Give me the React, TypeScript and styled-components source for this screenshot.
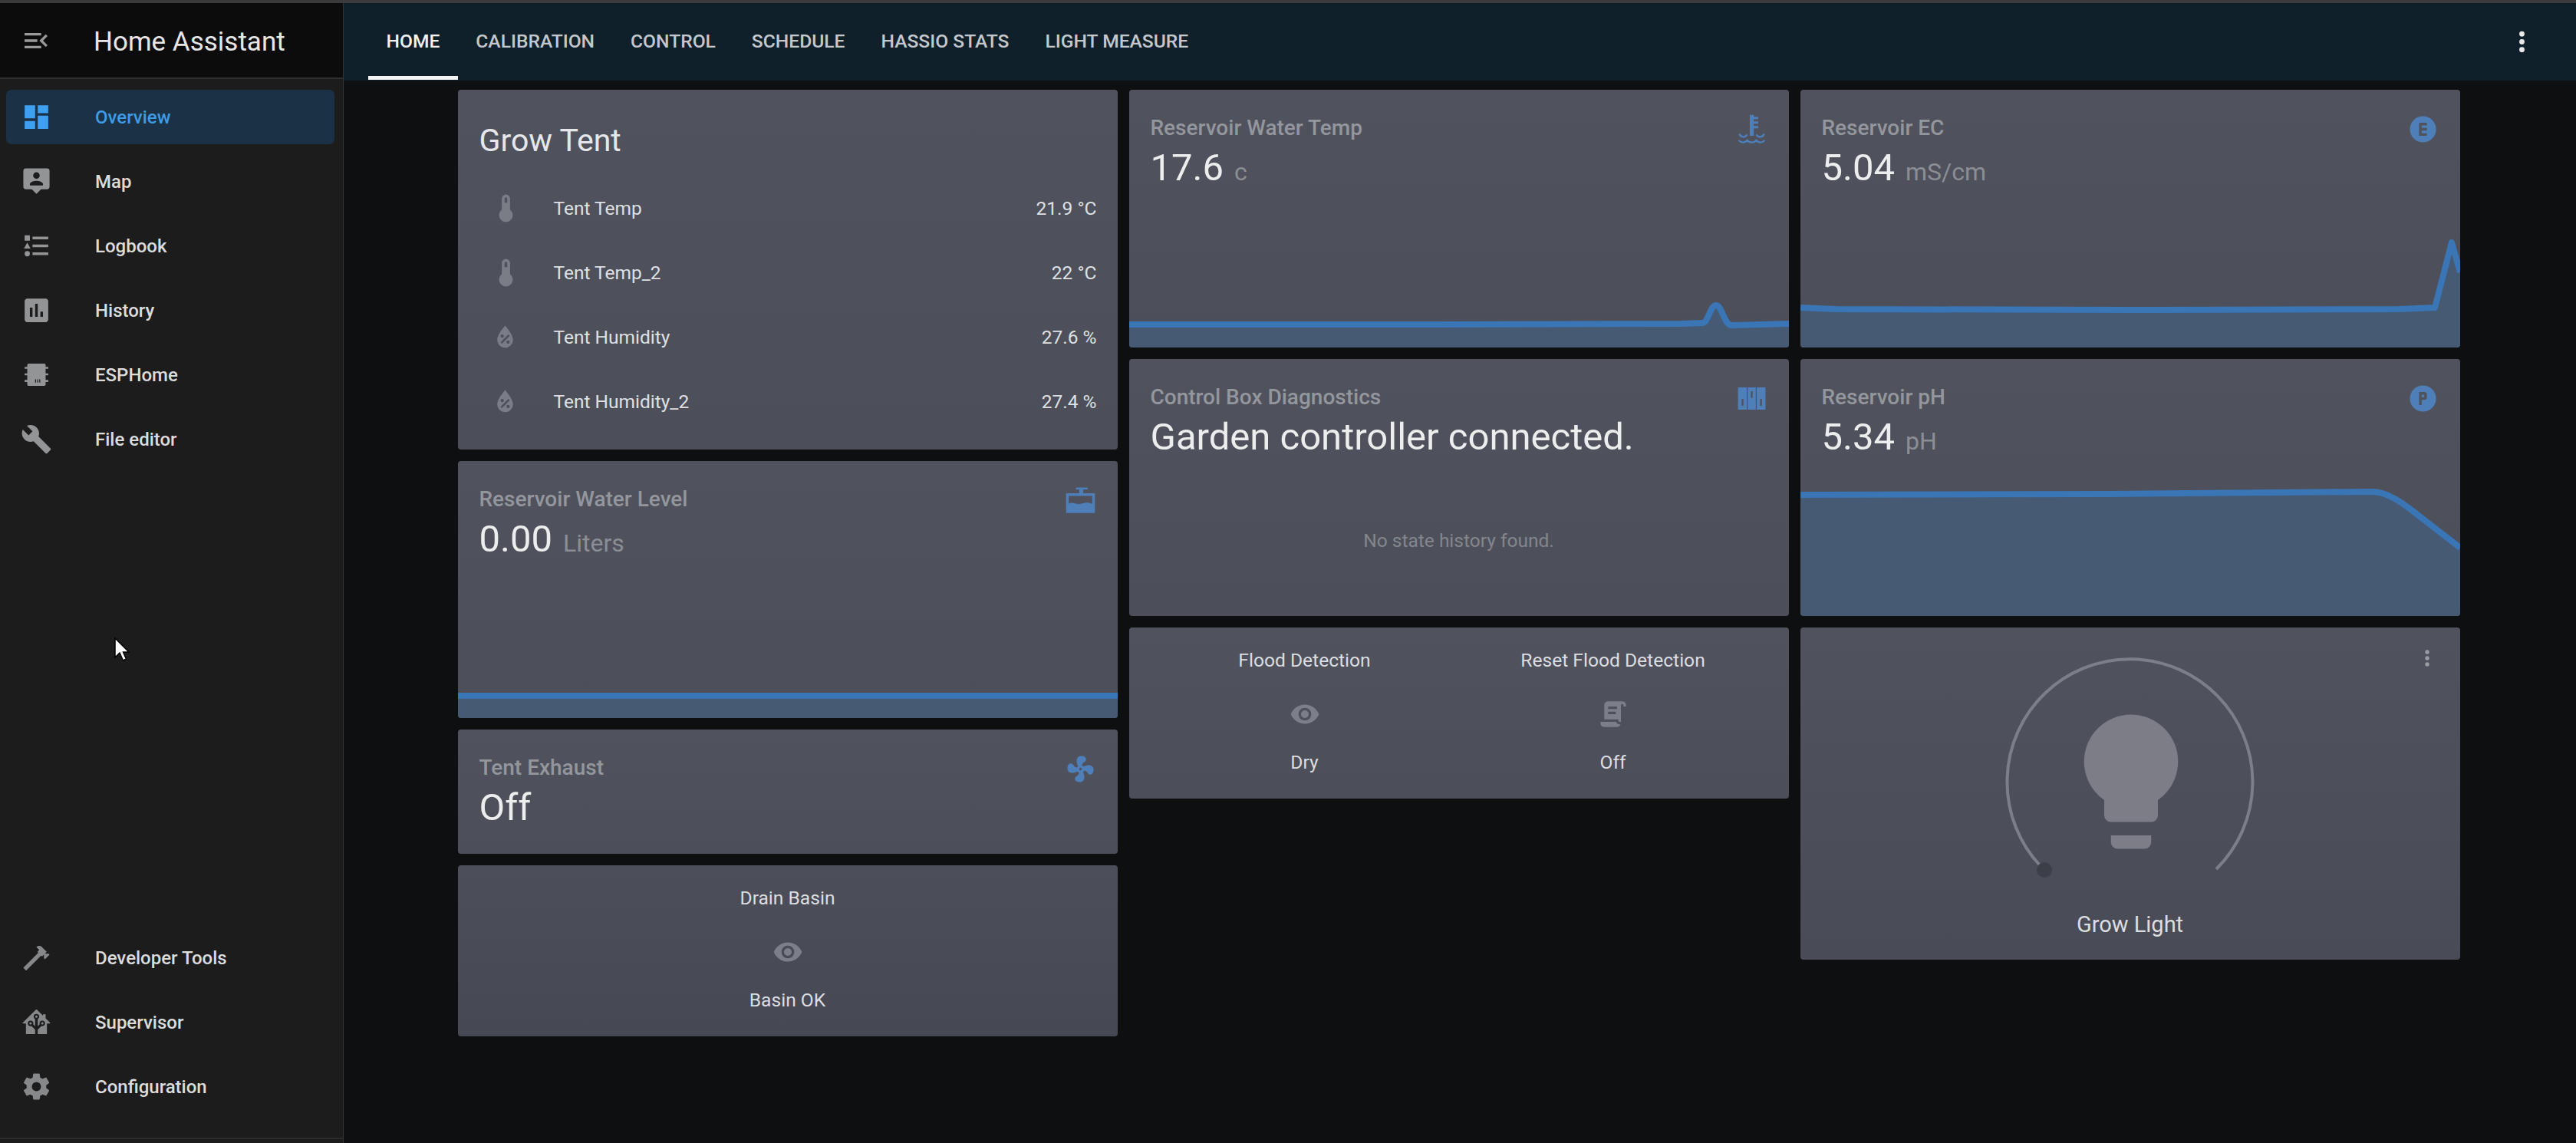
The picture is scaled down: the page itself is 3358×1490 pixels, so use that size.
import React from "react";
import styled, { createGlobalStyle } from "styled-components";

const P = {
  dashboard: "M13,3V9H21V3M13,21H21V11H13M3,21H11V15H3M3,13H11V3H3V13Z",
  map: "M20 2H4A2 2 0 0 0 2 4V16A2 2 0 0 0 4 18H8.5L12 21.5L15.5 18H20A2 2 0 0 0 22 16V4A2 2 0 0 0 20 2ZM12 5A2.5 2.5 0 0 1 12 10A2.5 2.5 0 0 1 12 5ZM7 15V14C7 12.3 10.3 11.5 12 11.5S17 12.3 17 14V15Z",
  logbook: "M5,9.5L7.5,14H2.5L5,9.5M3,4H7V8H3V4M5,20A2,2 0 0,0 7,18A2,2 0 0,0 5,16A2,2 0 0,0 3,18A2,2 0 0,0 5,20M9,5V7H21V5H9M9,19H21V17H9V19M9,13H21V11H9V13Z",
  history: "M19 3H5C3.9 3 3 3.9 3 5V19C3 20.1 3.9 21 5 21H19C20.1 21 21 20.1 21 19V5C21 3.9 20.1 3 19 3M9 17H7V10H9V17M13 17H11V7H13V17M17 17H15V13H17V17Z",
  chip: "M5 4.5A1 1 0 0 1 6 3.5H18A1 1 0 0 1 19 4.5V6H21V7.5H19V11H21V12.5H19V16H21V17.5H19V19.5A1 1 0 0 1 18 20.5H6A1 1 0 0 1 5 19.5V17.5H3V16H5V12.5H3V11H5V7.5H3V6H5ZM11 15.5V18H11.7V15.5ZM12.6 15.5V18H13.3V15.5ZM14.2 15.5V18H14.9V15.5Z",
  wrench: "M22.7,19L13.6,9.9C14.5,7.6 14,4.9 12.1,3C10.1,1 7.1,0.6 4.7,1.7L9,6L6,9L1.6,4.7C0.4,7.1 0.9,10.1 2.9,12.1C4.8,14 7.5,14.5 9.8,13.6L18.9,22.7C19.3,23.1 19.9,23.1 20.3,22.7L22.6,20.4C23.1,20 23.1,19.3 22.7,19Z",
  hammer: "M2 19.63L13.43 8.2L12.72 7.5L14.14 6.07L12 3.89C13.2 2.7 15.09 2.7 16.27 3.89L19.87 7.5L18.45 8.91H21.29L22 9.62L18.45 13.21L17.74 12.5V9.62L16.27 11.04L15.56 10.33L4.13 21.76L2 19.63Z",
  ha: "M21.8,13H20V21H13V17.67L15.79,14.88L16.5,15C17.66,15 18.6,14.06 18.6,12.9C18.6,11.74 17.66,10.8 16.5,10.8A2.1,2.1 0 0,0 14.4,12.9L14.5,13.61L13,15.13V9.65C13.66,9.29 14.1,8.6 14.1,7.8A2.1,2.1 0 0,0 12,5.7A2.1,2.1 0 0,0 9.9,7.8C9.9,8.6 10.34,9.29 11,9.65V15.13L9.5,13.61L9.6,12.9A2.1,2.1 0 0,0 7.5,10.8A2.1,2.1 0 0,0 5.4,12.9A2.1,2.1 0 0,0 7.5,15L8.21,14.88L11,17.67V21H4V13H2.25C1.83,13 1.42,13 1.42,12.79C1.43,12.57 1.85,12.15 2.28,11.72L11,3C11.33,2.67 11.67,2.33 12,2.33C12.33,2.33 12.67,2.67 13,3L17,7V6H19V9L21.78,11.78C22.15,12.15 22.53,12.53 22.54,12.74C22.56,12.96 22.18,13 21.8,13M7.5,12A0.9,0.9 0 0,1 8.4,12.9A0.9,0.9 0 0,1 7.5,13.8A0.9,0.9 0 0,1 6.6,12.9A0.9,0.9 0 0,1 7.5,12M16.5,12C17,12 17.4,12.4 17.4,12.9C17.4,13.4 17,13.8 16.5,13.8A0.9,0.9 0 0,1 15.6,12.9A0.9,0.9 0 0,1 16.5,12M12,6.9C12.5,6.9 12.9,7.3 12.9,7.8C12.9,8.3 12.5,8.7 12,8.7C11.5,8.7 11.1,8.3 11.1,7.8C11.1,7.3 11.5,6.9 12,6.9Z",
  cog: "M12,15.5A3.5,3.5 0 0,1 8.5,12A3.5,3.5 0 0,1 12,8.5A3.5,3.5 0 0,1 15.5,12A3.5,3.5 0 0,1 12,15.5M19.43,12.97C19.47,12.65 19.5,12.33 19.5,12C19.5,11.67 19.47,11.34 19.43,11L21.54,9.37C21.73,9.22 21.78,8.95 21.66,8.73L19.66,5.27C19.54,5.05 19.27,4.96 19.05,5.05L16.56,6.05C16.04,5.66 15.5,5.32 14.87,5.07L14.5,2.42C14.46,2.18 14.25,2 14,2H10C9.75,2 9.54,2.18 9.5,2.42L9.13,5.07C8.5,5.32 7.96,5.66 7.44,6.05L4.95,5.05C4.73,4.96 4.46,5.05 4.34,5.27L2.34,8.73C2.21,8.95 2.27,9.22 2.46,9.37L4.57,11C4.53,11.34 4.5,11.67 4.5,12C4.5,12.33 4.53,12.65 4.57,12.97L2.46,14.63C2.27,14.78 2.21,15.05 2.34,15.27L4.34,18.73C4.46,18.95 4.73,19.03 4.95,18.95L7.44,17.94C7.96,18.34 8.5,18.68 9.13,18.93L9.5,21.58C9.54,21.82 9.75,22 10,22H14C14.25,22 14.46,21.82 14.5,21.58L14.87,18.93C15.5,18.67 16.04,18.34 16.56,17.94L19.05,18.95C19.27,19.03 19.54,18.95 19.66,18.73L21.66,15.27C21.78,15.05 21.73,14.78 21.54,14.63L19.43,12.97Z",
  menuOpen: "M21,15.61L19.59,17L14.58,12L19.59,7L21,8.39L17.44,12L21,15.61M3,6H16V8H3V6M3,13V11H13V13H3M3,18V16H16V18H3Z",
  thermo: "M15 13V5A3 3 0 0 0 9 5V13A5 5 0 1 0 15 13M12 4A1 1 0 0 1 13 5V8H11V5A1 1 0 0 1 12 4Z",
  waterPercent: "M12,3.25C12,3.25 6,10 6,14C6,17.32 8.69,20 12,20A6,6 0 0,0 18,14C18,10 12,3.25 12,3.25M14.47,9.97L15.53,11.03L9.53,17.03L8.47,15.97M9.75,10A1.25,1.25 0 0,1 11,11.25A1.25,1.25 0 0,1 9.75,12.5A1.25,1.25 0 0,1 8.5,11.25A1.25,1.25 0 0,1 9.75,10M14.25,14.5A1.25,1.25 0 0,1 15.5,15.75A1.25,1.25 0 0,1 14.25,17A1.25,1.25 0 0,1 13,15.75A1.25,1.25 0 0,1 14.25,14.5Z",
  fan: "M12,11A1,1 0 0,0 11,12A1,1 0 0,0 12,13A1,1 0 0,0 13,12A1,1 0 0,0 12,11M12.5,2C17,2 17.11,5.57 14.75,6.75C13.76,7.24 13.32,8.29 13.13,9.22C13.61,9.42 14.03,9.73 14.35,10.13C18.05,8.13 22.03,8.92 22.03,12.5C22.03,17 18.46,17.1 17.28,14.73C16.78,13.74 15.72,13.3 14.79,13.11C14.59,13.59 14.28,14 13.88,14.34C15.87,18.03 15.08,22 11.5,22C7,22 6.91,18.42 9.27,17.24C10.25,16.75 10.69,15.71 10.89,14.79C10.4,14.59 9.97,14.27 9.65,13.87C5.96,15.85 2,15.07 2,11.5C2,7 5.56,6.89 6.74,9.26C7.24,10.25 8.29,10.68 9.22,10.87C9.41,10.39 9.73,9.97 10.14,9.65C8.15,5.96 8.94,2 12.5,2Z",
  eye: "M12,9A3,3 0 0,0 9,12A3,3 0 0,0 12,15A3,3 0 0,0 15,12A3,3 0 0,0 12,9M12,17A5,5 0 0,1 7,12A5,5 0 0,1 12,7A5,5 0 0,1 17,12A5,5 0 0,1 12,17M12,4.5C7,4.5 2.73,7.61 1,12C2.73,16.39 7,19.5 12,19.5C17,19.5 21.27,16.39 23,12C21.27,7.61 17,4.5 12,4.5Z",
  dots: "M12,16A2,2 0 0,1 14,18A2,2 0 0,1 12,20A2,2 0 0,1 10,18A2,2 0 0,1 12,16M12,10A2,2 0 0,1 14,12A2,2 0 0,1 12,14A2,2 0 0,1 10,12A2,2 0 0,1 12,10M12,4A2,2 0 0,1 14,6A2,2 0 0,1 12,8A2,2 0 0,1 10,6A2,2 0 0,1 12,4Z",
  circleE: "M12,2A10,10 0 0,0 2,12A10,10 0 0,0 12,22A10,10 0 0,0 22,12A10,10 0 0,0 12,2ZM9,7H15V9H11V11H15V13H11V15H15V17H9Z",
  circleP: "M12,2A10,10 0 0,0 2,12A10,10 0 0,0 12,22A10,10 0 0,0 22,12A10,10 0 0,0 12,2ZM9,7H13A2,2 0 0,1 15,9V11A2,2 0 0,1 13,13H11V17H9ZM11,9V11H13V9Z",
  tank: "M1 6.5H11V3.5H8.500V2H17.500V3.500H14V6.500H23V21.500H1ZM3 8.500V14.500C6 12.500 8.500 15.500 12 14.500C15.500 13.500 18 13 21 14.500V8.500Z",
  box: "M1.500 3.500H8.200V20.500H1.500ZM4.300 12.500V17.500H5.700V12.500ZM8.900 3.500H15.100V20.500H8.900ZM11.300 6.500V11.500H12.700V6.500ZM15.800 3.500H22.500V20.500H15.800ZM18.400 12.500V17.500H19.800V12.500Z",
  coolant: "M10.500 1H13.500V2.500H17V4.200H13.500V6H17V7.700H13.500V9.500H17V11.200H13.500V17H10.500Z",
  script: "M17.8,20C17.4,21.2 16.3,22 15,22H5C3.3,22 2,20.7 2,19V18H5L14.2,18C14.6,19.2 15.7,20 17,20H17.8M19,2C20.7,2 22,3.3 22,5V6H20V5C20,4.4 19.6,4 19,4C18.4,4 18,4.4 18,5V18H17C16.4,18 16,17.6 16,17V16H5V5C5,3.3 6.3,2 8,2H19M8,6V8H15V6H8M8,10V12H14V10H8Z",
  bulb: "M12,2A7,7 0 0,0 5,9C5,11.38 6.19,13.47 8,14.74V17A1,1 0 0,0 9,18H15A1,1 0 0,0 16,17V14.74C17.81,13.47 19,11.38 19,9A7,7 0 0,0 12,2M9,21A1,1 0 0,0 10,22H14A1,1 0 0,0 15,21V20H9V21Z",
};

const Global = createGlobalStyle`
  html, body { margin: 0; padding: 0; background: #0e0f11; }
  body { font-family: Roboto, "Liberation Sans", sans-serif; }
  * { box-sizing: border-box; }
`;

const Page = styled.div`
  position: relative;
  width: 3358px;
  height: 1490px;
  display: flex;
  flex-direction: column;
  overflow: hidden;
  background: #0e0f11;
`;
const TopStrip = styled.div`
  height: 4px;
  flex: none;
  background: #3b3b3e;
`;
const Body = styled.div`
  flex: 1;
  display: flex;
  min-height: 0;
`;
const Sidebar = styled.aside`
  width: 448px;
  flex: none;
  display: flex;
  flex-direction: column;
  background: #1c1c1d;
  border-right: 1px solid #343436;
`;
const SideHeader = styled.div`
  height: 99px;
  flex: none;
  display: flex;
  align-items: center;
  padding-left: 27px;
  gap: 55px;
  background: #0c0c0d;
  border-bottom: 2px solid #2f2f31;
`;
const AppTitle = styled.div`
  font-size: 35px;
  color: #e6e6e6;
  padding-top: 3px;
`;
const NavList = styled.nav<{ $fill?: boolean }>`
  display: flex;
  flex-direction: column;
  gap: 13px;
  padding: ${(p) => (p.$fill ? "14px 0 0" : "0 0 31px")};
  flex: ${(p) => (p.$fill ? 1 : "none")};
  border-bottom: ${(p) => (p.$fill ? "none" : "2px solid #2c2c2e")};
  margin-bottom: ${(p) => (p.$fill ? 0 : "5px")};
`;
const NavItem = styled.div<{ $active?: boolean }>`
  height: 71px;
  margin: 0 11px 0 8px;
  padding-left: 19px;
  display: flex;
  align-items: center;
  gap: 56px;
  border-radius: 7px;
  background: ${(p) => (p.$active ? "#1a3146" : "transparent")};
  color: ${(p) => (p.$active ? "#3f9be6" : "#dcdcdc")};
  font-size: 24px;
  font-weight: 500;
`;
const Svg = styled.svg<{ $size: number; $color: string }>`
  width: ${(p) => p.$size}px;
  height: ${(p) => p.$size}px;
  flex: none;
  display: block;
  fill: ${(p) => p.$color};
`;
const Main = styled.main`
  flex: 1;
  min-width: 0;
  display: flex;
  flex-direction: column;
`;
const TabBar = styled.div`
  height: 101px;
  flex: none;
  display: flex;
  align-items: stretch;
  padding: 0 50px 0 32px;
  background: #10202b;
`;
const Tab = styled.div<{ $active?: boolean }>`
  display: flex;
  align-items: center;
  padding: 0 23.5px;
  font-size: 24.6px;
  font-weight: 500;
  text-transform: uppercase;
  color: ${(p) => (p.$active ? "#f2f2f2" : "#c4c8cc")};
  border-bottom: 5px solid ${(p) => (p.$active ? "#f4f4f4" : "transparent")};
  margin-bottom: 1px;
  padding-top: 3px;
`;
const TabMenu = styled.div`
  margin-left: auto;
  display: flex;
  align-items: center;
`;
const Columns = styled.div`
  display: grid;
  grid-template-columns: repeat(3, 860px);
  column-gap: 15px;
  justify-content: center;
  align-items: start;
  padding-top: 12px;
  margin-right: 3px;
`;
const Column = styled.div`
  display: flex;
  flex-direction: column;
  gap: 15px;
`;
const Card = styled.section<{ $h: number; $tone?: "light" | "drain" }>`
  position: relative;
  height: ${(p) => p.$h}px;
  display: flex;
  flex-direction: column;
  border-radius: 4px;
  overflow: hidden;
  background: ${(p) =>
    p.$tone === "drain"
      ? "linear-gradient(180deg, #4c4f59, #464953)"
      : p.$tone === "light"
      ? "linear-gradient(180deg, #50535d, #494c56)"
      : "linear-gradient(180deg, #50535d, #4c4f59)"};
`;
const CardTitle = styled.h2`
  margin: 0;
  height: 112px;
  padding: 46px 0 0 28px;
  font-size: 41px;
  line-height: 41px;
  font-weight: 400;
  color: #e6e7ea;
`;
const EntityRow = styled.div`
  height: 84px;
  flex: none;
  display: flex;
  align-items: center;
  padding: 0 27px 0 41px;
  font-size: 24.5px;
  color: #dfe0e3;
`;
const EntityName = styled.span`
  margin-left: 41px;
  flex: 1;
`;
const EntityHumidityName = styled(EntityName)`
  margin-left: 43px;
`;
const SensorHead = styled.div`
  flex: none;
  height: 129px;
  display: flex;
  justify-content: space-between;
  padding: 31px 28px 0;
`;
const SensorText = styled.div`
  display: flex;
  flex-direction: column;
`;
const SensorName = styled.div`
  font-size: 28px;
  line-height: 37px;
  font-weight: 500;
  color: #94969d;
`;
const SensorValue = styled.div`
  margin-top: 6px;
  font-size: 49px;
  line-height: 56px;
  color: #eceded;
  display: flex;
  align-items: baseline;
`;
const Unit = styled.span`
  margin-left: 14px;
  font-size: 32px;
  color: #8b8e95;
`;
const ChartSvg = styled.svg<{ $h: number }>`
  display: block;
  flex: none;
  width: 100%;
  height: ${(p) => p.$h}px;
  margin-top: auto;
`;
const NoHistory = styled.div`
  flex: 1;
  display: flex;
  align-items: center;
  justify-content: center;
  padding-top: 8px;
  font-size: 24.5px;
  color: #83868d;
`;
const Glances = styled.div<{ $cols: number }>`
  flex: 1;
  display: grid;
  grid-template-columns: repeat(${(p) => p.$cols}, 1fr);
  padding: 24px 28px 0;
`;
const Glance = styled.div`
  display: flex;
  flex-direction: column;
  align-items: center;
  font-size: 24.6px;
  color: #dcdde0;
`;
const GlanceLabel = styled.div`
  height: 38px;
  line-height: 38px;
`;
const GlanceIcon = styled.div`
  margin: 19px 0 12px;
  height: 64px;
  display: flex;
  align-items: center;
`;
const MoreButton = styled.div`
  position: absolute;
  top: 24px;
  right: 27px;
`;
const LightDial = styled.svg`
  display: block;
  flex: none;
  width: 100%;
  height: 367px;
`;
const LightName = styled.div`
  text-align: center;
  font-size: 29px;
  line-height: 40px;
  color: #dcdde0;
`;
const Cursor = styled.svg`
  position: absolute;
  left: 148px;
  top: 830px;
  width: 22px;
  height: 34px;
`;

const Icon = ({ d, size = 41, color = "#8f9194" }: { d: string; size?: number; color?: string }) => (
  <Svg viewBox="0 0 24 24" $size={size} $color={color}>
    <path d={d} fillRule="evenodd" />
  </Svg>
);

const BLUE = "#4e7fb8";

const CoolantIcon = () => (
  <Svg viewBox="0 0 24 24" $size={41} $color={BLUE}>
    <path d={P.coolant} />
    <path d="M2.500 15.500C3.500 18.500 7 18.500 8.500 16M15.500 16C17 18.500 20.500 18.500 21.500 15.500" fill="none" stroke={BLUE} strokeWidth="1.400" />
    <path d="M2 20.500C4 22.500 7 22.500 8.500 20.500C10 22.500 14 22.500 15.500 20.500C17 22.500 20 22.500 22 20.500" fill="none" stroke={BLUE} strokeWidth="1.400" />
  </Svg>
);

const Chart = ({ h, line }: { h: number; line: string }) => (
  <ChartSvg $h={h} viewBox={`0 0 860 ${h}`} preserveAspectRatio="none">
    <path d={`${line} L860 ${h} L0 ${h} Z`} fill="#465a73" />
    <path d={line} fill="none" stroke="#3a75b6" strokeWidth="8" strokeLinejoin="round" />
  </ChartSvg>
);

const Sensor = ({ h, name, value, unit, icon, children }: { h: number; name: string; value: string; unit?: string; icon: React.ReactNode; children?: React.ReactNode }) => (
  <Card $h={h}>
    <SensorHead>
      <SensorText>
        <SensorName>{name}</SensorName>
        <SensorValue>
          {value}
          {unit && <Unit>{unit}</Unit>}
        </SensorValue>
      </SensorText>
      {icon}
    </SensorHead>
    {children}
  </Card>
);

const GlanceItem = ({ name, d, state }: { name: string; d: string; state: string }) => (
  <Glance>
    <GlanceLabel>{name}</GlanceLabel>
    <GlanceIcon>
      <Icon d={d} size={40} color="#7c7f88" />
    </GlanceIcon>
    <GlanceLabel>{state}</GlanceLabel>
  </Glance>
);

const topNav = [
  { label: "Overview", d: P.dashboard, active: true },
  { label: "Map", d: P.map },
  { label: "Logbook", d: P.logbook },
  { label: "History", d: P.history },
  { label: "ESPHome", d: P.chip },
  { label: "File editor", d: P.wrench },
];
const bottomNav = [
  { label: "Developer Tools", d: P.hammer },
  { label: "Supervisor", d: P.ha },
  { label: "Configuration", d: P.cog },
];
const tabs = ["Home", "Calibration", "Control", "Schedule", "Hassio Stats", "Light Measure"];
const temps = [
  { name: "Tent Temp", value: "21.9 °C" },
  { name: "Tent Temp_2", value: "22 °C" },
];
const humidities = [
  { name: "Tent Humidity", value: "27.6 %" },
  { name: "Tent Humidity_2", value: "27.4 %" },
];

export default function App() {
  return (
    <Page>
      <Global />
      <TopStrip />
      <Body>
        <Sidebar>
          <SideHeader>
            <Icon d={P.menuOpen} size={40} color="#9a9a9a" />
            <AppTitle>Home Assistant</AppTitle>
          </SideHeader>
          <NavList $fill>
            {topNav.map((n) => (
              <NavItem key={n.label} $active={n.active}>
                <Icon d={n.d} size={41} color={n.active ? "#3f9ff0" : "#929496"} />
                {n.label}
              </NavItem>
            ))}
          </NavList>
          <NavList>
            {bottomNav.map((n) => (
              <NavItem key={n.label}>
                <Icon d={n.d} size={41} color="#86888a" />
                {n.label}
              </NavItem>
            ))}
          </NavList>
        </Sidebar>
        <Main>
          <TabBar>
            {tabs.map((t, i) => (
              <Tab key={t} $active={i === 0}>
                {t}
              </Tab>
            ))}
            <TabMenu>
              <Icon d={P.dots} size={41} color="#e8e8e8" />
            </TabMenu>
          </TabBar>
          <Columns>
            <Column>
              <Card $h={469}>
                <CardTitle>Grow Tent</CardTitle>
                {temps.map((e) => (
                  <EntityRow key={e.name}>
                    <Icon d={P.thermo} size={43} color="#7a7d86" />
                    <EntityName>{e.name}</EntityName>
                    {e.value}
                  </EntityRow>
                ))}
                {humidities.map((e) => (
                  <EntityRow key={e.name}>
                    <Icon d={P.waterPercent} size={41} color="#7a7d86" />
                    <EntityHumidityName>{e.name}</EntityHumidityName>
                    {e.value}
                  </EntityRow>
                ))}
              </Card>
              <Sensor h={335} name="Reservoir Water Level" value="0.00" unit="Liters" icon={<Icon d={P.tank} color={BLUE} />}>
                <Chart h={100} line="M0 71 L860 71" />
              </Sensor>
              <Sensor h={162} name="Tent Exhaust" value="Off" icon={<Icon d={P.fan} color={BLUE} />} />
              <Card $h={223} $tone="drain">
                <Glances $cols={1}>
                  <GlanceItem name="Drain Basin" d={P.eye} state="Basin OK" />
                </Glances>
              </Card>
            </Column>
            <Column>
              <Sensor h={336} name="Reservoir Water Temp" value="17.6" unit="c" icon={<CoolantIcon />}>
                <Chart h={100} line="M0 70 L400 70 L720 69 L747 68 C755 68 757 45 765 45 C773 45 775 70 785 71 L860 69" />
              </Sensor>
              <Sensor h={335} name="Control Box Diagnostics" value="Garden controller connected." icon={<Icon d={P.box} color={BLUE} />}>
                <NoHistory>No state history found.</NoHistory>
              </Sensor>
              <Card $h={223}>
                <Glances $cols={2}>
                  <GlanceItem name="Flood Detection" d={P.eye} state="Dry" />
                  <GlanceItem name="Reset Flood Detection" d={P.script} state="Off" />
                </Glances>
              </Card>
            </Column>
            <Column>
              <Sensor h={336} name="Reservoir EC" value="5.04" unit="mS/cm" icon={<Icon d={P.circleE} color={BLUE} />}>
                <Chart h={160} line="M0 108 L47 110 L440 111 L780 110 L827 108 L849 23 L860 62" />
              </Sensor>
              <Sensor h={335} name="Reservoir pH" value="5.34" unit="pH" icon={<Icon d={P.circleP} color={BLUE} />}>
                <Chart h={200} line="M0 42 L400 41 L745 38 C765 38 785 53 798 63 L860 111" />
              </Sensor>
              <Card $h={433} $tone="light">
                <MoreButton>
                  <Icon d={P.dots} size={32} color="#9a9ca3" />
                </MoreButton>
                <LightDial viewBox="0 0 860 367">
                  <path d="M313 311 A160 160 0 1 1 542 315" fill="none" stroke="#7d7f88" strokeWidth="4" />
                  <circle cx="318" cy="316" r="10" fill="#3c3f48" />
                  <g transform="translate(326 96) scale(8.750)">
                    <path d={P.bulb} fill="#7c7d87" />
                  </g>
                </LightDial>
                <LightName>Grow Light</LightName>
              </Card>
            </Column>
          </Columns>
        </Main>
      </Body>
      <Cursor viewBox="0 0 22 34">
        <path d="M2 2V27L8 21L12.500 31L16.500 29L12.500 20H20Z" fill="#fff" stroke="#000" strokeWidth="1.500" />
      </Cursor>
    </Page>
  );
}
